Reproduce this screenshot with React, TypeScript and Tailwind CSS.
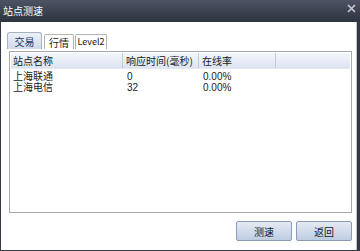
export default function App() {
  const rows = [
    { name: '上海联通', ms: '0', rate: '0.00%' },
    { name: '上海电信', ms: '32', rate: '0.00%' },
  ];

  return (
    <div
      className="w-[360px] h-[251px] flex flex-col bg-[#343946] text-[10px] text-[#1a1a1a]"
      style={{ fontFamily: '"Noto Sans CJK SC", "Noto Sans", sans-serif' }}
    >
      {/* title bar */}
      <div className="h-[22px] flex items-center justify-between pl-[3px] pr-[4px] bg-gradient-to-b from-[#4d5364] to-[#2e3340]">
        <span className="text-white text-[10px] leading-none">站点测速</span>
        <svg width="9" height="9" viewBox="0 0 9 9" className="mb-[5px]">
          <path d="M1 1 L8 8 M8 1 L1 8" stroke="#c8ccd4" strokeWidth="1.6" />
        </svg>
      </div>

      {/* body */}
      <div className="flex-1 flex flex-col bg-white ml-[1px] mr-[3px] mb-[1px] border-r border-[#c4c4c4] pl-[6px] pr-[4px]">
        {/* tabs */}
        <div className="flex items-end gap-[1px] mt-[10px] h-[17px]">
          <div className="h-[17px] w-[35px] flex items-center justify-center rounded-t-[3px] border border-b-0 border-[#a7b2c4] bg-gradient-to-b from-[#eef2f9] to-[#cfd9ea] text-[#1f3763]">
            交易
          </div>
          <div className="h-[15px] w-[30px] ml-[1px] flex items-center justify-center rounded-t-[2px] border border-b-0 border-[#b4b4b4] bg-white">
            行情
          </div>
          <div className="h-[15px] w-[32px] flex items-center justify-center rounded-t-[2px] border border-b-0 border-[#b4b4b4] bg-white text-[9px]">
            Level2
          </div>
        </div>

        {/* list */}
        <div className="mt-[2px] ml-[2px] h-[162px] border border-[#a8a8a8] p-[1px] flex flex-col">
          <div className="h-[16px] flex items-center bg-gradient-to-b from-[#f3f6fb] to-[#dce4f1] border-b border-[#e3e8f0]">
            <div className="w-[112px] pl-[2px] border-r border-[#c3cbd8] h-full flex items-center">站点名称</div>
            <div className="w-[76px] pl-[3px] border-r border-[#c3cbd8] h-full flex items-center">响应时间(毫秒)</div>
            <div className="w-[77px] pl-[3px] border-r border-[#c3cbd8] h-full flex items-center">在线率</div>
            <div className="flex-1" />
          </div>
          <div
            className="pt-[2px]"
            style={{ fontFamily: '"Liberation Sans", "Noto Sans CJK SC", sans-serif' }}
          >
            {rows.map((r) => (
              <div key={r.name} className="flex h-[11px] items-center leading-[10px]">
                <div className="w-[112px] pl-[2px]">{r.name}</div>
                <div className="w-[76px] pl-[4px]">{r.ms}</div>
                <div className="w-[77px] pl-[4px]">{r.rate}</div>
              </div>
            ))}
          </div>
        </div>

        {/* buttons */}
        <div className="flex justify-end gap-[4px] mt-[8px]">
          <button className="w-[56px] h-[20px] rounded-[2px] border border-[#8d9cb6] bg-gradient-to-b from-[#e4eaf4] to-[#bfcde3] text-[10px] text-[#1a1a1a]">
            测速
          </button>
          <button className="w-[56px] h-[20px] rounded-[2px] border border-[#8d9cb6] bg-gradient-to-b from-[#e4eaf4] to-[#bfcde3] text-[10px] text-[#1a1a1a]">
            返回
          </button>
        </div>
      </div>
    </div>
  );
}
